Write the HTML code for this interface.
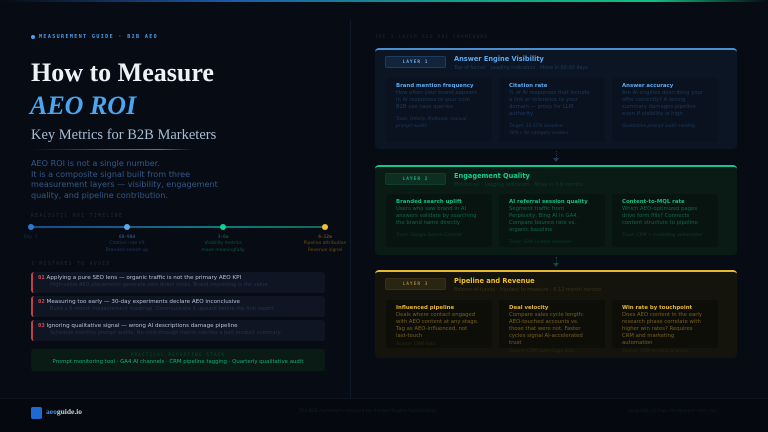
<!DOCTYPE html>
<html><head><meta charset="utf-8"><style>
*{margin:0;padding:0;box-sizing:border-box}
body{width:768px;height:432px;background:#070b13;overflow:hidden;position:relative;font-family:"DejaVu Sans","Liberation Sans",sans-serif}
.a{position:absolute}
.mono{font-family:"DejaVu Sans Mono","Liberation Mono",monospace}
.serif{font-family:"Liberation Serif",serif}
.layer{position:absolute;left:375px;width:362px;border-radius:4px}
.tag{position:absolute;left:10px;top:6px;width:61px;height:12px;border-radius:2px;font-size:4.5px;font-weight:bold;letter-spacing:1px;text-align:center;line-height:11px;font-family:"DejaVu Sans Mono",monospace}
.lt{position:absolute;left:79px;top:5px;font-size:6.6px;font-weight:bold}
.ls{position:absolute;left:79px;top:15px;font-size:4.9px}
.card{position:absolute;width:106px;border-radius:3px;padding:5px 12px 5px 10px;font-size:5.3px;line-height:7px}
.card b{display:block;font-size:5.4px;line-height:7px}
.card i{display:block;margin-top:5px;font-size:4.4px;line-height:7px}
.mk{position:absolute;left:31px;width:294px;height:21px;background:#0f1523;border-radius:3px;border-left:2px solid #c0404a;padding:3px 0 0 5px;font-size:5.6px;line-height:7px;color:#b8c4d6}
.mk span{color:#d64a52;font-weight:bold;font-family:"DejaVu Sans Mono",monospace}
.mk div{color:#22344e;padding-left:12px;font-size:5.1px}
</style></head><body>
<div class="a" style="left:0;top:0;width:768px;height:2px;background:linear-gradient(90deg,#070b13,#1e5aa8 30%,#12a08a 60%,#10c080 85%,#070b13)"></div>
<div class="a" style="left:350px;top:20px;width:1px;height:378px;background:#111a28"></div>

<div class="a" style="left:31px;top:35px;width:4px;height:4px;border-radius:50%;background:#4aa0f0"></div>
<div class="a mono" style="left:39px;top:34px;font-size:5px;font-weight:bold;letter-spacing:1.4px;color:#4aa0f0">MEASUREMENT GUIDE · B2B AEO</div>
<div class="a serif" style="left:31px;top:58px;font-size:26px;font-weight:bold;color:#eef2f7;line-height:30px">How to Measure</div>
<div class="a serif" style="left:30px;top:91px;font-size:26px;font-weight:bold;font-style:italic;color:#4aa6f0;line-height:30px">AEO ROI</div>
<div class="a serif" style="left:31px;top:127px;font-size:14.5px;color:#a8bcd4">Key Metrics for B2B Marketers</div>
<div class="a" style="left:31px;top:149px;width:162px;height:1px;background:linear-gradient(90deg,#070b13,#1e6a8a 50%,#12a080 80%,#070b13)"></div>
<div class="a" style="left:31px;top:158px;font-size:8.1px;line-height:10.7px;color:#34588a">AEO ROI is not a single number.<br>It is a composite signal built from three<br>measurement layers — visibility, engagement<br>quality, and pipeline contribution.</div>

<div class="a mono" style="left:31px;top:214px;font-size:4.8px;letter-spacing:1.3px;color:#1c2c40">REALISTIC ROI TIMELINE</div>
<div class="a" style="left:31px;top:226px;width:294px;height:2px;background:linear-gradient(90deg,#1a4a8a,#1a5a8a 33%,#107a78 66%,#0e6a5a)"></div>
<div class="a" style="left:28px;top:224px;width:6px;height:6px;border-radius:50%;background:#2a78d0"></div>
<div class="a" style="left:124px;top:224px;width:6px;height:6px;border-radius:50%;background:#5aaaf0"></div>
<div class="a" style="left:220px;top:224px;width:6px;height:6px;border-radius:50%;background:#10d090"></div>
<div class="a" style="left:322px;top:224px;width:6px;height:6px;border-radius:50%;background:#f0c030"></div>
<div class="a mono" style="left:24px;top:235px;font-size:4.5px;color:#1e2e44">Day 1</div>
<div class="a" style="left:97px;top:235px;width:60px;text-align:center;font-size:4.5px;line-height:6.3px;color:#1e3a60"><b class="mono" style="color:#2a4c70">60-90d</b><br>Citation rate lift<br>Branded search up</div>
<div class="a" style="left:188px;top:235px;width:70px;text-align:center;font-size:4.5px;line-height:6.3px;color:#0e5a44"><b class="mono">3-6m</b><br>Visibility metrics<br>move meaningfully</div>
<div class="a" style="left:295px;top:235px;width:60px;text-align:center;font-size:4.5px;line-height:6.3px;color:#6a5010"><b class="mono">6-12m</b><br>Pipeline attribution<br>Revenue signal</div>

<div class="a mono" style="left:31px;top:262px;font-size:4.8px;letter-spacing:1.3px;color:#1c2c40">3 MISTAKES TO AVOID</div>
<div class="mk" style="top:272px"><span>01</span> Applying a pure SEO lens — organic traffic is not the primary AEO KPI<div>High-value AEO placements generate zero direct clicks. Brand imprinting is the value.</div></div>
<div class="mk" style="top:296px"><span>02</span> Measuring too early — 30-day experiments declare AEO inconclusive<div>Build a 6-month measurement roadmap. Communicate it upward before the first report.</div></div>
<div class="mk" style="top:320px"><span>03</span> Ignoring qualitative signal — wrong AI descriptions damage pipeline<div>Schedule monthly prompt audits. No click-through metric catches a bad product summary.</div></div>
<div class="a" style="left:31px;top:349px;width:294px;height:22px;background:#0a1a14;border-radius:3px;text-align:center">
<div class="mono" style="font-size:4.3px;letter-spacing:1.2px;color:#0e4a34;margin-top:4px">PRACTICAL REPORTING STACK</div>
<div style="font-size:5.4px;color:#12b07a;margin-top:1px">Prompt monitoring tool · GA4 AI channels · CRM pipeline tagging · Quarterly qualitative audit</div></div>

<div class="a mono" style="left:375px;top:35px;font-size:4.5px;letter-spacing:1.2px;color:#1c2a3c">THE 3-LAYER AEO ROI FRAMEWORK</div>

<div class="layer" style="top:48px;height:101px;background:#0c1523;border-top:2px solid #4a90d0">
<div class="tag" style="background:#12233a;border:1px solid #1e3c5c;color:#6aa8e0">LAYER 1</div>
<div class="lt" style="color:#5aaaf0">Answer Engine Visibility</div>
<div class="ls" style="color:#1e3a5c">Top-of-funnel · Leading indicators · Move in 60-90 days</div>
<div class="card" style="left:11px;top:28px;height:64px;background:#0a1220;color:#1e3a5c"><b style="color:#5aaaf0">Brand mention frequency</b>How often your brand appears in AI responses to your core B2B use case queries<i>Tools: Otterly, Profound, manual prompt audits</i></div>
<div class="card" style="left:124px;top:28px;height:64px;background:#0a1220;color:#1e3a5c"><b style="color:#5aaaf0">Citation rate</b>% of AI responses that include a link or reference to your domain — proxy for LLM authority<i>Target: 10-15% baseline<br>30%+ for category leaders</i></div>
<div class="card" style="left:237px;top:28px;height:64px;background:#0a1220;color:#1e3a5c"><b style="color:#5aaaf0">Answer accuracy</b>Are AI engines describing your offer correctly? A wrong summary damages pipeline even if visibility is high<i>Qualitative prompt audit monthly</i></div>
</div>
<div class="a" style="left:556px;top:151px;width:1px;height:9px;border-left:1px dotted #1e3a5c"></div>
<div class="a" style="left:553px;top:158px;border:3px solid transparent;border-top:4px solid #1e3a5c"></div>

<div class="layer" style="top:165px;height:90px;background:#0a1a14;border-top:2px solid #10c890">
<div class="tag" style="background:#0e2e22;border:1px solid #0e3e2c;color:#10b080">LAYER 2</div>
<div class="lt" style="color:#10d090">Engagement Quality</div>
<div class="ls" style="color:#0e3e2c">Mid-funnel · Lagging indicators · Move in 3-6 months</div>
<div class="card" style="left:11px;top:27px;height:53px;background:#08140f;color:#0e6a4c"><b style="color:#10c088">Branded search uplift</b>Users who saw brand in AI answers validate by searching the brand name directly<i style="color:#0e3e2c">Track: Google Search Console</i></div>
<div class="card" style="left:124px;top:27px;height:53px;background:#08140f;color:#0e6a4c"><b style="color:#10c088">AI referral session quality</b>Segment traffic from Perplexity, Bing AI in GA4. Compare bounce rate vs. organic baseline<i style="color:#0e3e2c">Track: GA4 custom channels</i></div>
<div class="card" style="left:237px;top:27px;height:53px;background:#08140f;color:#0e6a4c"><b style="color:#10c088">Content-to-MQL rate</b>Which AEO-optimized pages drive form fills? Connects content structure to pipeline<i style="color:#0e3e2c">Track: CRM + marketing automation</i></div>
</div>
<div class="a" style="left:556px;top:257px;width:1px;height:8px;border-left:1px dotted #0e4a3a"></div>
<div class="a" style="left:553px;top:263px;border:3px solid transparent;border-top:4px solid #0e4a3a"></div>

<div class="layer" style="top:270px;height:88px;background:#14130c;border-top:2px solid #e8b830">
<div class="tag" style="background:#2a2412;border:1px solid #3a3016;color:#a08030">LAYER 3</div>
<div class="lt" style="color:#f0c030">Pipeline and Revenue</div>
<div class="ls" style="color:#3a3418">Bottom-of-funnel · Hardest to measure · 6-12 month horizon</div>
<div class="card" style="left:11px;top:28px;height:48px;background:#0e0e09;color:#7a6020"><b style="color:#e8b830">Influenced pipeline</b>Deals where contact engaged with AEO content at any stage. Tag as AEO-influenced, not last-touch<i style="color:#2e2a14;margin-top:1px">Source: CRM data</i></div>
<div class="card" style="left:124px;top:28px;height:48px;background:#0e0e09;color:#7a6020"><b style="color:#e8b830">Deal velocity</b>Compare sales cycle length: AEO-touched accounts vs. those that were not. Faster cycles signal AI-accelerated trust<i style="color:#2e2a14;margin-top:1px">Source: CRM sales stage data</i></div>
<div class="card" style="left:237px;top:28px;height:48px;background:#0e0e09;color:#7a6020"><b style="color:#e8b830">Win rate by touchpoint</b>Does AEO content in the early research phase correlate with higher win rates? Requires CRM and marketing automation<i style="color:#2e2a14;margin-top:1px">Source: CRM win/loss analysis</i></div>
</div>

<div class="a" style="left:0;top:398px;width:768px;height:34px;background:#05080e;border-top:1px solid #0e1520"></div>
<div class="a" style="left:31px;top:407px;width:11px;height:12px;border-radius:2px;background:#1e6ad0"></div>
<div class="a serif" style="left:46px;top:407px;font-size:7.5px;font-weight:bold;color:#c8d0dc"><span style="color:#4a90e0">aeo</span>guide.io</div>
<div class="a" style="left:299px;top:409px;font-size:4.5px;color:#141e30">The B2B marketer's resource for Answer Engine Optimization</div>
<div class="a mono" style="left:628px;top:409px;font-size:4.3px;color:#141e30">aeoguide.io/how-to-measure-aeo-roi/</div>
</body></html>
